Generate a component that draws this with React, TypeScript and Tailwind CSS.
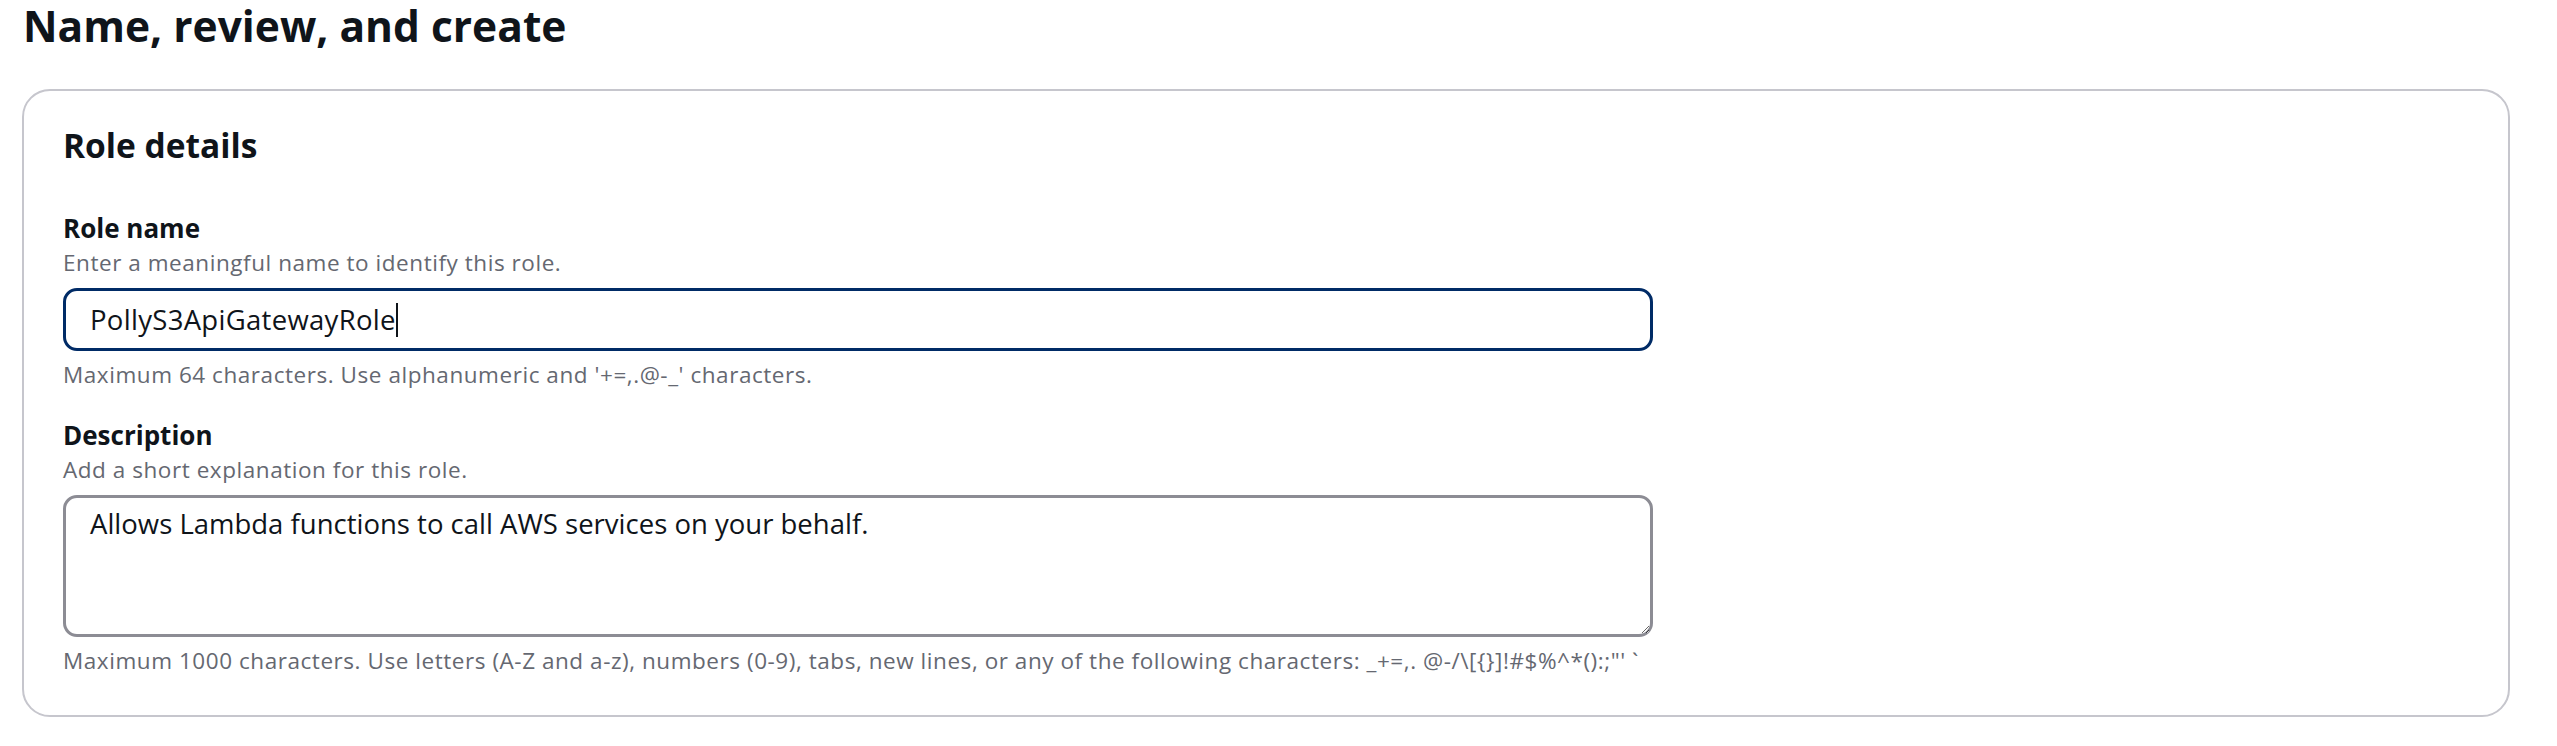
const fontStack = { fontFamily: '"Open Sans", "Noto Sans", Arial, sans-serif' };

const helpCls = "text-[22.5px] leading-[26px] tracking-[0.55px] text-[#656871]";
const labelCls = "text-[26px] leading-[30px] font-bold text-[#0f141a]";

const Field = ({
  label,
  description,
  constraint,
  children,
  first,
}: {
  label: string;
  description: string;
  constraint: string;
  children: React.ReactNode;
  first?: boolean;
}) => (
  <div className={first ? "mt-[47px]" : "mt-[32px]"}>
    <div className={labelCls}>{label}</div>
    <div className={`${helpCls} mt-[7px]`}>{description}</div>
    <div className="mt-[12px] w-[1590px]">{children}</div>
    <div className={`${helpCls} mt-[11px] whitespace-nowrap`}>{constraint}</div>
  </div>
);

export default function App() {
  return (
    <div className="min-h-screen bg-white pl-[22px] pr-[47px]" style={fontStack}>
      <h1 className="text-[42.5px] leading-[52px] font-bold text-[#0f141a] pl-[1px]">
        Name, review, and create
      </h1>

      <section className="mt-[37px] w-[2488px] border-2 border-[#c6c6cd] rounded-[28px] pt-[33px] pb-[41px] px-[39px]">
        <h2 className="text-[33.5px] leading-[42px] font-bold text-[#0f141a]">Role details</h2>

        <Field
          first
          label="Role name"
          description="Enter a meaningful name to identify this role."
          constraint="Maximum 64 characters. Use alphanumeric and '+=,.@-_' characters."
        >
          <div className="h-[63px] border-[3px] border-[#002b66] rounded-[14px] px-[24px] flex items-center text-[27.5px] tracking-[0.3px] text-[#0f141a]">
            <span>PollyS3ApiGatewayRole</span>
            <span className="inline-block w-[2px] h-[34px] bg-[#0f141a]" />
          </div>
        </Field>

        <Field
          label="Description"
          description="Add a short explanation for this role."
          constraint={"Maximum 1000 characters. Use letters (A-Z and a-z), numbers (0-9), tabs, new lines, or any of the following characters: _+=,. @-/\\[{}]!#$%^*():;\"' `"}
        >
          <textarea
            defaultValue="Allows Lambda functions to call AWS services on your behalf."
            className="block w-full h-[142px] border-[3px] border-[#8c8c94] rounded-[14px] px-[24px] pt-[9px] text-[27.5px] leading-[34px] text-[#0f141a] outline-none resize-y"
            style={fontStack}
          />
        </Field>
      </section>
    </div>
  );
}
